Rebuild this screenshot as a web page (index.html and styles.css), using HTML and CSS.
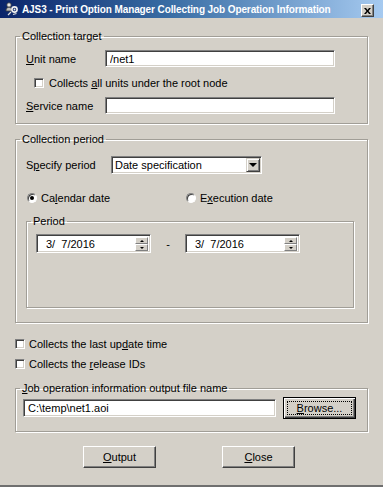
FILE: index.html
```html
<!DOCTYPE html>
<html lang="en">
<head>
    <meta charset="UTF-8">
    <meta name="viewport" content="width=device-width, initial-scale=1.0">
    <title>AJS3 - Print Option Manager Collecting Job Operation Information</title>
    <link rel="stylesheet" href="styles.css">
</head>
<body>
    <div class="window">
        <div class="titlebar">
            <svg class="app-icon" width="14" height="14" viewBox="0 0 14 14">
                <circle cx="4" cy="3" r="2.2" fill="#e8e8e8" stroke="#404040" stroke-width="0.8"/>
                <path d="M1 9c0-2.5 1.3-3.8 3-3.8s3 1.3 3 3.8z" fill="#c0c0c0" stroke="#404040" stroke-width="0.8"/>
                <circle cx="9.5" cy="7.5" r="2.6" fill="none" stroke="#f0f0f0" stroke-width="1.6"/>
                <circle cx="9.5" cy="7.5" r="0.9" fill="#f0f0f0"/>
                <path d="M3 13l3-3M8 12.5l3.5-1" stroke="#e0e0e0" stroke-width="1.2"/>
            </svg>
            <span class="title">AJS3 - Print Option Manager Collecting Job Operation Information</span>
            <span class="title-close">
                <svg width="7" height="6" viewBox="0 0 7 6">
                    <path d="M0 0h2l1.5 2 1.5-2h2l-2.5 3 2.5 3h-2l-1.5-2-1.5 2h-2l2.5-3z" fill="#000"/>
                </svg>
            </span>
        </div>

        <div class="client">
            <fieldset class="group target">
                <legend>Collection target</legend>
                <div class="row row-unit">
                    <label class="field-label"><u>U</u>nit name</label>
                    <input class="textbox" type="text" value="/net1">
                </div>
                <div class="row row-check indent">
                    <span class="checkbox"></span>
                    <span>Collects <u>a</u>ll units under the root node</span>
                </div>
                <div class="row row-service">
                    <label class="field-label"><u>S</u>ervice name</label>
                    <input class="textbox" type="text" value="">
                </div>
            </fieldset>

            <fieldset class="group period-group">
                <legend>Collection period</legend>
                <div class="row row-specify">
                    <label class="field-label specify-label">S<u>p</u>ecify period</label>
                    <div class="combo">
                        <span class="combo-value">Date specification</span>
                        <span class="combo-btn"><span class="arrow-down"></span></span>
                    </div>
                </div>
                <div class="row row-radio">
                    <div class="radio-item first">
                        <span class="radio checked"></span>
                        <span>Ca<u>l</u>endar date</span>
                    </div>
                    <div class="radio-item">
                        <span class="radio"></span>
                        <span>E<u>x</u>ecution date</span>
                    </div>
                </div>

                <fieldset class="group period">
                    <legend>Period</legend>
                    <div class="row row-dates">
                        <div class="datebox">
                            <span class="date-value">3/  7/2016</span>
                            <span class="spin">
                                <span class="spin-btn"><span class="arrow-up"></span></span>
                                <span class="spin-btn"><span class="arrow-down small"></span></span>
                            </span>
                        </div>
                        <span class="dash">-</span>
                        <div class="datebox">
                            <span class="date-value">3/  7/2016</span>
                            <span class="spin">
                                <span class="spin-btn"><span class="arrow-up"></span></span>
                                <span class="spin-btn"><span class="arrow-down small"></span></span>
                            </span>
                        </div>
                    </div>
                </fieldset>
            </fieldset>

            <div class="row row-check first-option">
                <span class="checkbox"></span>
                <span>Collects the last up<u>d</u>ate time</span>
            </div>
            <div class="row row-check second-option">
                <span class="checkbox"></span>
                <span>Collects the <u>r</u>elease IDs</span>
            </div>

            <fieldset class="group output-group">
                <legend><u>J</u>ob operation information output file name</legend>
                <div class="row row-file">
                    <input class="textbox file" type="text" value="C:\temp\net1.aoi">
                    <button class="btn default"><span class="focus"><u>B</u>rowse...</span></button>
                </div>
            </fieldset>

            <div class="row actions">
                <button class="btn"><u>O</u>utput</button>
                <button class="btn"><u>C</u>lose</button>
            </div>
        </div>
    </div>
</body>
</html>
```

FILE: styles.css
```css
body {
    margin: 0;
    font-family: "Liberation Sans", Arial, sans-serif;
    font-size: 11px;
    color: #000;
    background: #fff;
}
.window {
    width: 383px;
    height: 487px;
    box-sizing: border-box;
    background: #d4d0c8;
    border-bottom: 2px solid #6f6f6f;
}
.titlebar {
    height: 18px;
    display: flex;
    align-items: center;
    padding: 0 9px 0 5px;
    background: linear-gradient(90deg, #0a246a 0%, #3a6ea5 45%, #a6caf0 100%);
    color: #fff;
    font-size: 10px;
    font-weight: bold;
}
.app-icon {
    flex: none;
    margin-right: 3px;
}
.title {
    flex: 1;
    white-space: nowrap;
    letter-spacing: -0.1px;
}
.title-close {
    width: 11px;
    height: 11px;
    margin-top: 3px;
    display: flex;
    align-items: center;
    justify-content: center;
    background: #d4d0c8;
    border: 1px solid;
    border-color: #fff #404040 #404040 #fff;
    box-shadow: inset -1px -1px #808080;
}
.client {
    padding: 12px 15px 0 15px;
}

/* group boxes */
.group {
    margin: 0;
    padding: 0 10px;
    min-width: 0;
    border: 1px solid #a19e97;
    box-shadow: inset 1px 1px #fff, 1px 1px #fff;
}
.group legend {
    padding: 0 2px;
    margin-left: -6px;
    line-height: 13px;
}
.target {
    padding-bottom: 9px;
}
.period-group {
    margin-top: 9px;
    padding-bottom: 14px;
}
.period {
    width: 328px;
    box-sizing: border-box;
    margin-top: 11px;
    padding: 0 9px 54px;
}
.period legend {
    margin-left: -5px;
}
.output-group {
    margin-top: 12px;
    padding: 0 7px 12px;
}
.output-group legend {
    margin-left: -3px;
}

/* rows */
.row {
    display: flex;
    align-items: center;
}
.row-unit {
    margin-top: 7px;
    height: 17px;
}
.row-check {
    height: 13px;
}
.target .row-check {
    margin-top: 9px;
    padding-left: 8px;
}
.row-service {
    margin-top: 8px;
    height: 17px;
}
.field-label {
    width: 79px;
    flex: none;
}
.specify-label {
    width: 85px;
}
.row-specify {
    margin-top: 10px;
    height: 18px;
}
.row-radio {
    margin-top: 17px;
    height: 13px;
}
.radio-item {
    display: flex;
    align-items: center;
    gap: 4px;
}
.radio-item.first {
    width: 159px;
    margin-left: 1px;
}
.row-dates {
    margin-top: 6px;
    height: 19px;
}
.first-option {
    margin-top: 14px;
}
.second-option {
    margin-top: 7px;
}
.row-file {
    margin-top: 2px;
    height: 22px;
    gap: 7px;
}
.actions {
    margin-top: 14px;
    padding-left: 68px;
    gap: 66px;
}

/* controls */
.textbox {
    width: 230px;
    height: 17px;
    box-sizing: border-box;
    margin: 0;
    padding: 0 4px;
    font: inherit;
    color: #000;
    background: #fff;
    border: 1px solid;
    border-color: #808080 #fff #fff #808080;
    box-shadow: inset 1px 1px #404040, inset -1px -1px #d4d0c8;
    outline: none;
}
.textbox.file {
    width: 253px;
    height: 18px;
}
.checkbox {
    width: 10px;
    height: 10px;
    box-sizing: border-box;
    flex: none;
    margin-right: 5px;
    background: #fff;
    border: 1px solid;
    border-color: #808080 #fff #fff #808080;
    box-shadow: inset 1px 1px #404040, inset -1px -1px #d4d0c8;
}
.first-option .checkbox,
.second-option .checkbox {
    margin-right: 4px;
}
.radio {
    position: relative;
    width: 10px;
    height: 10px;
    box-sizing: border-box;
    flex: none;
    border-radius: 50%;
    background: #fff;
    border: 1px solid;
    border-color: #808080 #fff #fff #808080;
    box-shadow: inset 1px 1px #404040;
}
.radio.checked::after {
    content: "";
    position: absolute;
    left: 2px;
    top: 2px;
    width: 4px;
    height: 4px;
    border-radius: 50%;
    background: #000;
}
.combo {
    width: 151px;
    height: 18px;
    box-sizing: border-box;
    display: flex;
    background: #fff;
    border: 1px solid;
    border-color: #808080 #fff #fff #808080;
    box-shadow: inset 1px 1px #404040, inset -1px -1px #d4d0c8;
    padding: 1px;
}
.combo-value {
    flex: 1;
    padding-left: 2px;
    line-height: 14px;
}
.combo-btn {
    width: 14px;
    box-sizing: border-box;
    display: flex;
    align-items: center;
    justify-content: center;
    background: #d4d0c8;
    border: 1px solid;
    border-color: #d4d0c8 #404040 #404040 #d4d0c8;
    box-shadow: inset 1px 1px #fff, inset -1px -1px #808080;
}
.arrow-down {
    width: 0;
    height: 0;
    border-left: 4px solid transparent;
    border-right: 4px solid transparent;
    border-top: 4px solid #000;
}
.arrow-down.small,
.arrow-up {
    border-left-width: 2px;
    border-right-width: 2px;
    border-top-width: 2px;
}
.arrow-up {
    width: 0;
    height: 0;
    border-left: 2px solid transparent;
    border-right: 2px solid transparent;
    border-bottom: 2px solid #000;
}
.datebox {
    width: 115px;
    height: 19px;
    box-sizing: border-box;
    display: flex;
    background: #fff;
    border: 1px solid;
    border-color: #808080 #fff #fff #808080;
    box-shadow: inset 1px 1px #404040, inset -1px -1px #d4d0c8;
    padding: 2px 2px 1px 1px;
}
.date-value {
    flex: 1;
    padding-left: 8px;
    line-height: 15px;
    white-space: pre;
}
.spin {
    width: 13px;
    display: flex;
    flex-direction: column;
}
.spin-btn {
    flex: 1;
    display: flex;
    align-items: center;
    justify-content: center;
    background: #d4d0c8;
    border: 1px solid;
    border-color: #fff #808080 #808080 #fff;
}
.dash {
    width: 34px;
    text-align: center;
}
.btn {
    width: 73px;
    height: 22px;
    box-sizing: border-box;
    margin: 0;
    padding: 0;
    font: inherit;
    color: #000;
    background: #d4d0c8;
    border: 1px solid;
    border-color: #fff #404040 #404040 #fff;
    box-shadow: inset -1px -1px #808080;
}
.btn.default {
    border: 1px solid #000;
    box-shadow: inset 1px 1px #fff, inset -1px -1px #404040, inset -2px -2px #808080;
    padding: 3px;
    display: flex;
}
.focus {
    flex: 1;
    display: flex;
    align-items: center;
    justify-content: center;
    border: 1px dotted #000;
}
```
